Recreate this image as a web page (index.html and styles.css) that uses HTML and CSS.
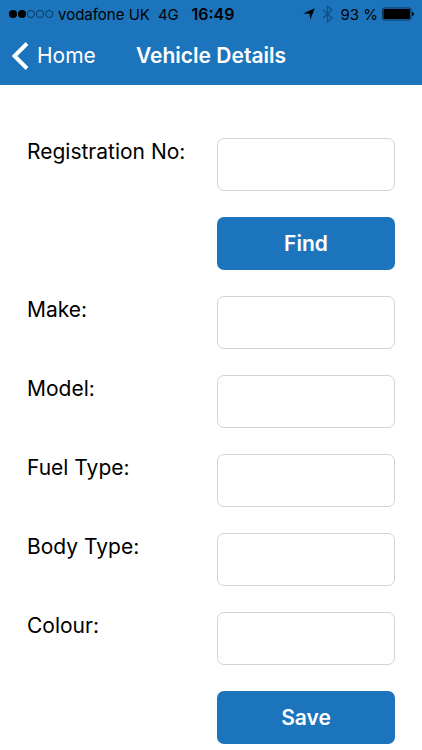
FILE: index.html
```html
<!DOCTYPE html>
<html lang="en">
<head>
<meta charset="utf-8">
<meta name="viewport" content="width=device-width, initial-scale=1">
<title>Vehicle Details</title>
<link rel="stylesheet" href="styles.css">
</head>
<body>
<header class="top">
  <div class="status">
    <div class="carrier">
      <svg class="signal" width="46" height="10" viewBox="0 0 46 10" aria-hidden="true"><circle cx="5" cy="5" r="4"/><circle cx="14" cy="5" r="4"/><g fill="none" stroke="#082a48" stroke-width="0.8"><circle cx="23" cy="5" r="3.6"/><circle cx="32" cy="5" r="3.6"/><circle cx="41.2" cy="5" r="3.6"/></g></svg>
      <span>vodafone UK</span>
      <span>4G</span>
    </div>
    <span class="time">16:49</span>
    <div class="power">
      <svg width="12" height="12" viewBox="0 0 12 12" aria-hidden="true"><path d="M11.8.2 7.2 11.8 6.6 5.8.3 5.4z"/></svg>
      <svg class="bluetooth" width="11" height="18" viewBox="0 0 11 18" aria-hidden="true"><path d="M1 4.8 10 13 5.5 16.8V1.2L10 5 1 13.2" fill="none" stroke="currentColor" stroke-width="1.3"/></svg>
      <span>93 %</span>
      <svg class="battery" width="32" height="14" viewBox="0 0 32 14" aria-hidden="true"><rect x=".5" y="1" width="28.5" height="12" rx="2" fill="none" stroke="#062440" stroke-width="0.8"/><rect x="1.5" y="2" width="26.5" height="10" rx="1"/><path d="M30 4.8q2 .8 2 2.2t-2 2.2z"/></svg>
    </div>
  </div>
  <nav class="nav">
    <a class="back" href="#home"><svg width="17" height="28" viewBox="0 0 17 28" aria-hidden="true"><path d="M15 1.5 2.5 14 15 26.5" fill="none" stroke="#fff" stroke-width="4"/></svg>Home</a>
    <h1 class="title">Vehicle Details</h1>
  </nav>
</header>
<main>
  <form class="form">
    <label for="reg">Registration No:</label><input id="reg" type="text">
    <button type="button">Find</button>
    <label for="make">Make:</label><input id="make" type="text">
    <label for="model">Model:</label><input id="model" type="text">
    <label for="fuel">Fuel Type:</label><input id="fuel" type="text">
    <label for="body">Body Type:</label><input id="body" type="text">
    <label for="colour">Colour:</label><input id="colour" type="text">
    <button type="button">Save</button>
  </form>
</main>
</body>
</html>
```
FILE: styles.css
```css
* { box-sizing: border-box; }
body { margin: 0; background: #fff; color: #000; font-family: Inter, "Liberation Sans", sans-serif; }
.top { background: #1c75bc; }
.status { display: grid; grid-template-columns: 1fr auto 1fr; align-items: center; height: 28px; padding: 0 8px; font-size: 15px; }
.carrier, .power { display: flex; align-items: center; white-space: nowrap; }
.carrier { gap: 8px; }
.signal { margin-right: -4px; }
.power { justify-content: flex-end; gap: 7px; }
.battery { margin-left: -3px; }
.bluetooth { color: #144f80; }
.time { padding-left: 4px; font-size: 16px; font-weight: 600; }
.nav { display: grid; grid-template-columns: 1fr auto 1fr; align-items: center; height: 57px; padding: 0 12px 2px; color: #fff; }
.back { display: flex; align-items: center; gap: 8px; color: #fff; font-size: 21px; text-decoration: none; }
.title { margin: 0; font-size: 21px; font-weight: 600; }
.form { display: grid; grid-template-columns: 1fr 178px; row-gap: 26px; padding: 53px 27px 6px; }
.form label { font-size: 21px; line-height: 27px; }
.form input, .form button { width: 100%; height: 53px; padding: 0 12px; border-radius: 7px; font: inherit; font-size: 21px; }
.form input { border: 1px solid #d4d4d4; background: #fff; }
.form button { grid-column: 2; border: 0; background: #1c75bc; color: #fff; font-weight: 600; }
```
